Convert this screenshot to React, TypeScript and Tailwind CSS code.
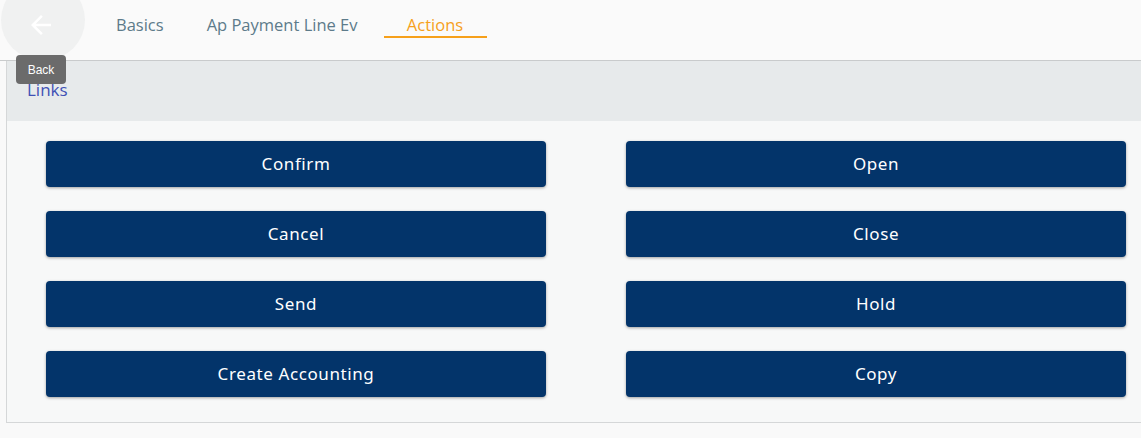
const rows: [string, string][] = [
  ["Confirm", "Open"],
  ["Cancel", "Close"],
  ["Send", "Hold"],
  ["Create Accounting", "Copy"],
];

function ActionButton({ label }: { label: string }) {
  return (
    <button className="h-[46px] w-[500px] rounded-[4px] bg-[#03346a] text-white text-[17px] shadow-[0_1px_3px_rgba(0,0,0,0.35)] font-['Noto_Sans',sans-serif] tracking-[0.6px]">
      {label}
    </button>
  );
}

export default function App() {
  return (
    <div className="w-[1141px] h-[438px] bg-[#f9f9f9] overflow-hidden font-['Open_Sans',sans-serif]">
      <div className="relative h-[61px] bg-[#fafafa] border-b border-[#c9cbcc] flex items-start">
        <div className="absolute left-[1px] top-[-20px] w-[84px] h-[80px] rounded-full bg-[#f0f1f1]" />
        <svg
          className="absolute left-[26px] top-[10px]"
          width="30"
          height="30"
          viewBox="0 0 24 24"
          fill="#ffffff"
        >
          <path d="M20 11H7.83l5.59-5.59L12 4l-8 8 8 8 1.41-1.41L7.83 13H20v-2z" />
        </svg>
        <nav className="ml-[110px] flex items-start pt-[13px] text-[16.5px]">
          <div className="px-[6px] h-[25px] text-[#5d7b8a]">Basics</div>
          <div className="ml-[31px] px-[6px] h-[25px] text-[#5d7b8a]">Ap Payment Line Ev</div>
          <div className="ml-[20px] w-[103px] h-[25px] text-center text-[#f6a01a] border-b-2 border-[#f6a01a]">Actions</div>
        </nav>
        <div className="absolute left-[16px] top-[55px] z-10 w-[50px] h-[29px] rounded-[4px] bg-[#6b6b6b] text-white text-[12px] flex items-center justify-center font-['Liberation_Sans',sans-serif]">
          Back
        </div>
      </div>
      <div className="ml-[6px] h-[362px] border-l border-b border-[#d5d7d8] flex flex-col">
        <div className="h-[60px] bg-[#e7eaeb] pl-[20px] flex items-center">
          <span className="text-[#3f51b5] text-[17px] pb-[3px]">Links</span>
        </div>
        <div className="flex-1 bg-[#f7f8f8] pt-[20px] pl-[39px] flex flex-col gap-[24px]">
          {rows.map(([a, b]) => (
            <div key={a} className="flex gap-[80px]">
              <ActionButton label={a} />
              <ActionButton label={b} />
            </div>
          ))}
        </div>
      </div>
    </div>
  );
}
